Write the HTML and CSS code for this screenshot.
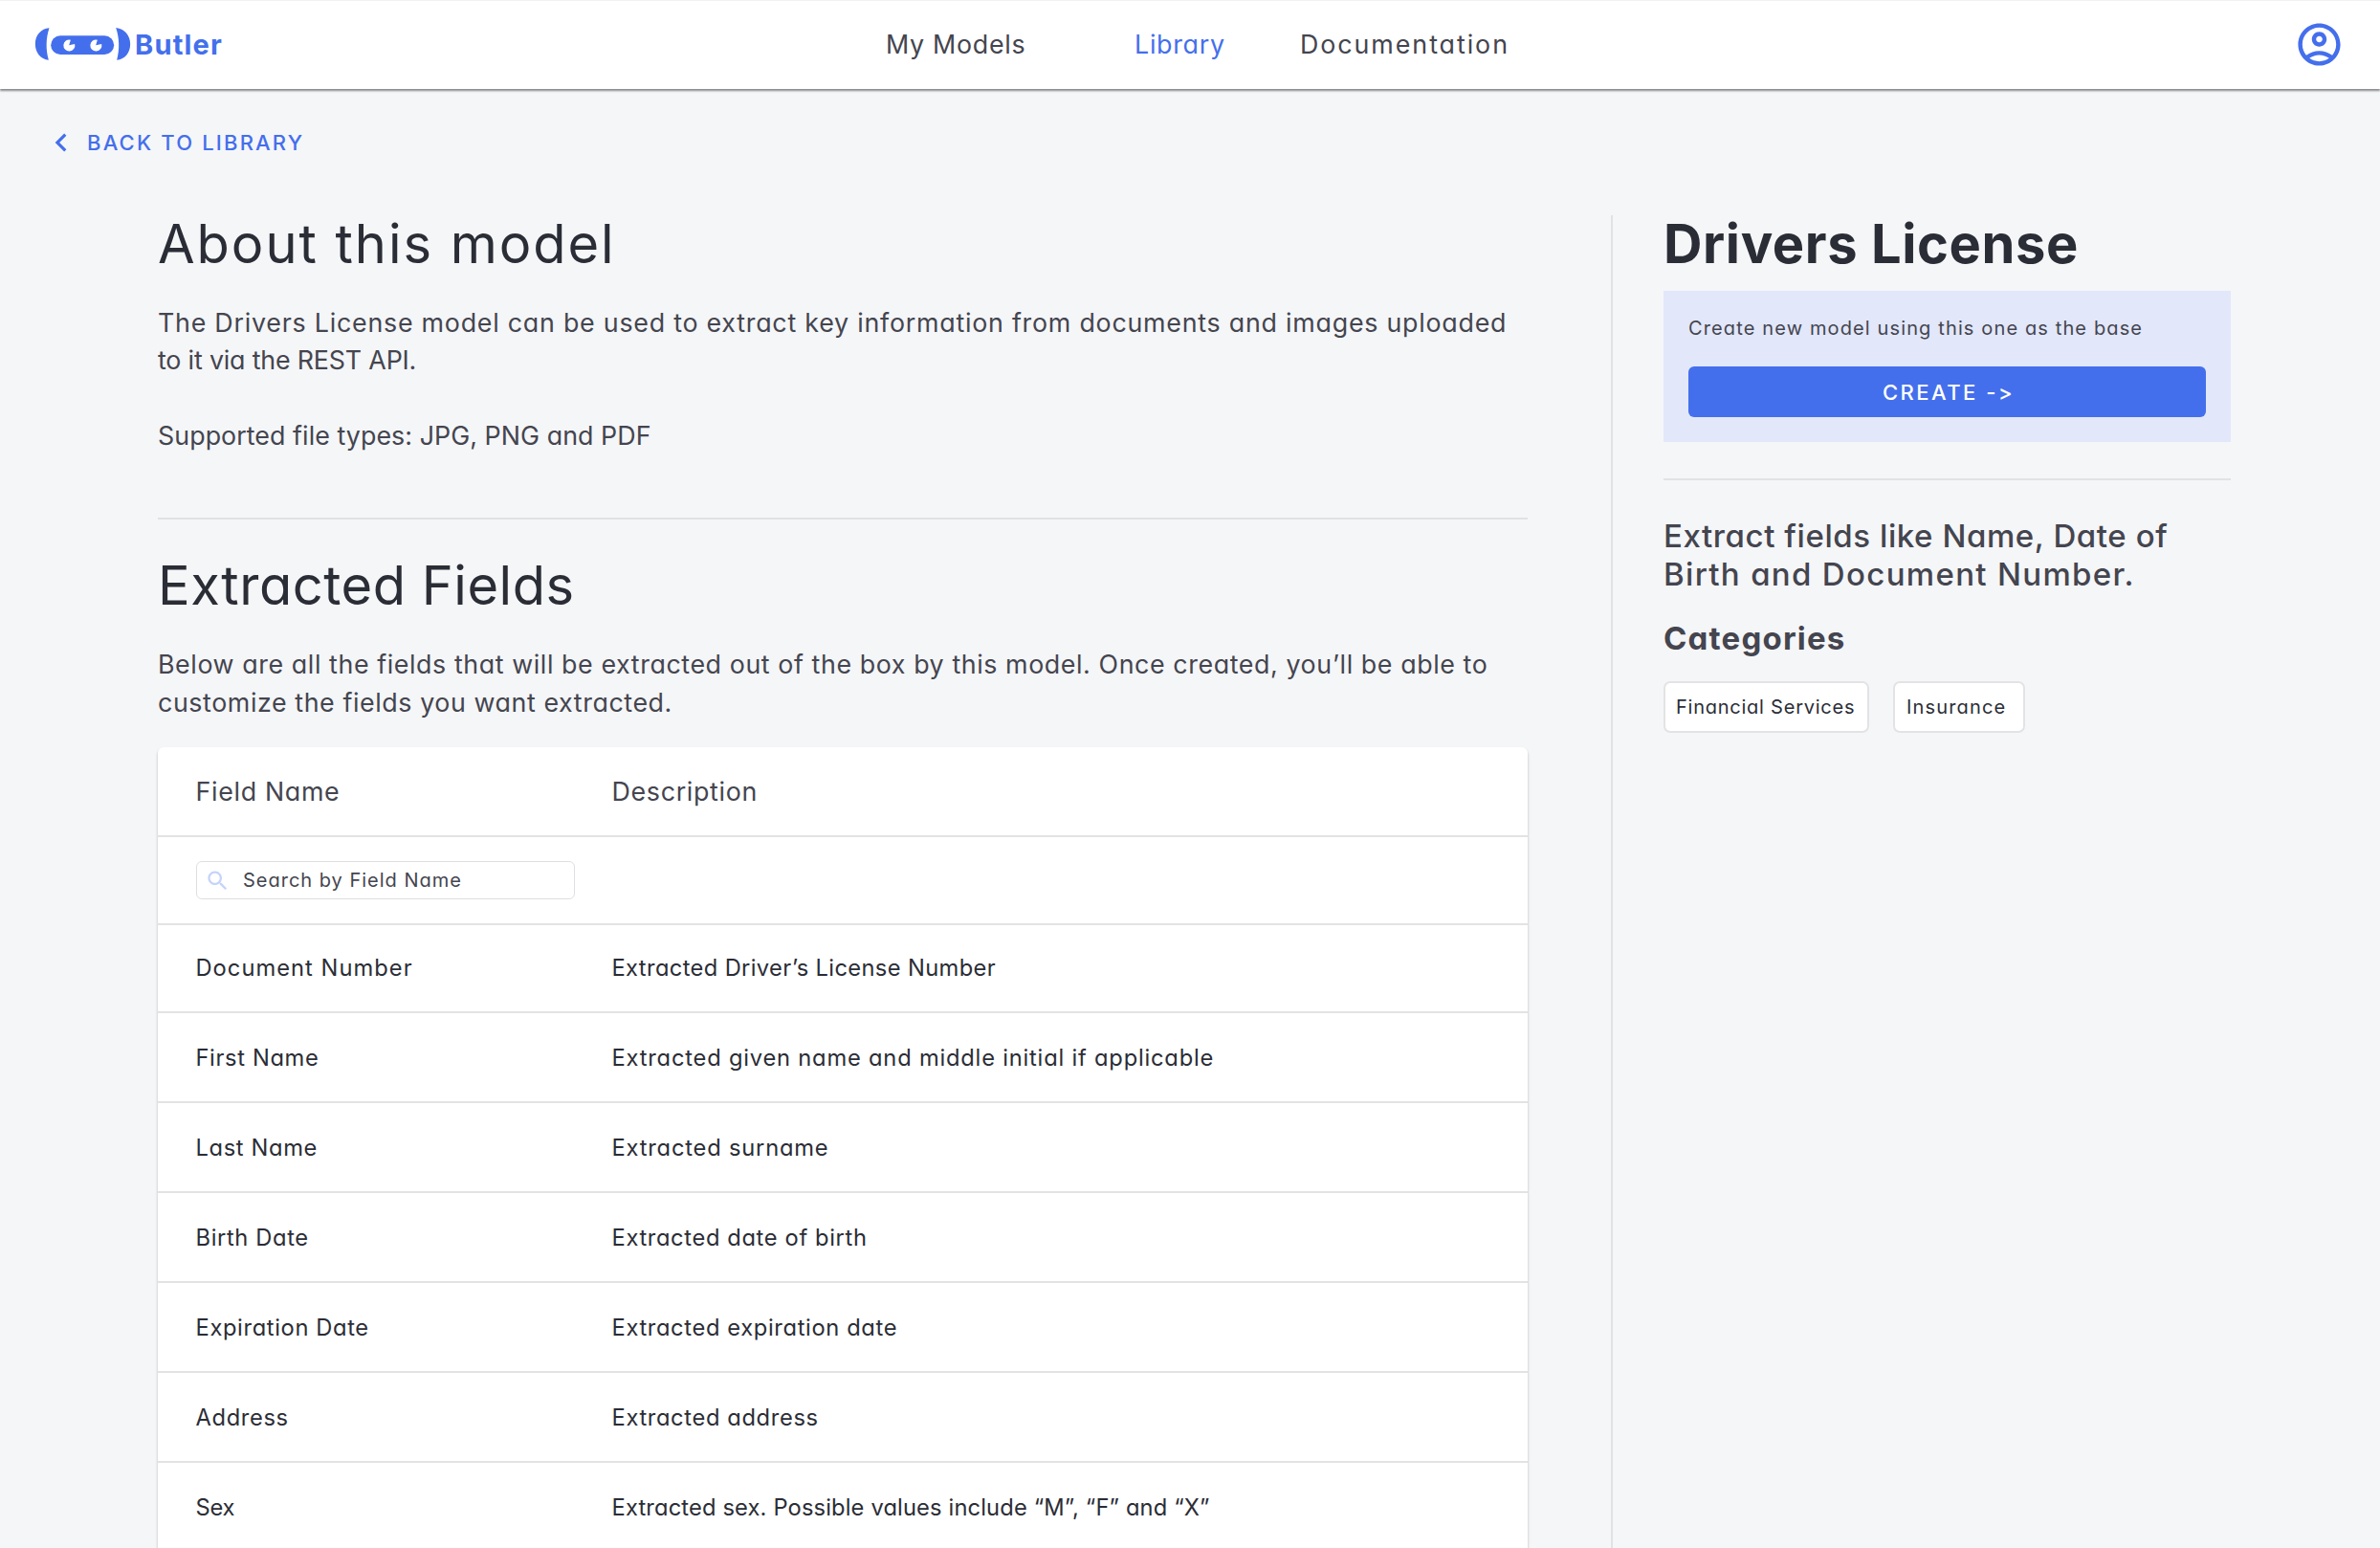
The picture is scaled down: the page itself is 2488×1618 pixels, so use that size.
FILE: index.html
```html
<!DOCTYPE html>
<html lang="en">
<head>
<meta charset="utf-8">
<title>Butler</title>
<link rel="stylesheet" href="styles.css">
</head>
<body>
<header class="topbar">
  <a class="brand">
    <svg class="brand-mark" viewBox="108 84 302 108" aria-hidden="true">
      <path d="M154 88C128 90 110 111 110 138s17 48 42 50c-9-32-9-67 2-100z"/>
      <path d="M363 87c27 3 45 24 45 51s-16 48-42 50c9-33 8-69-3-101z"/>
      <rect x="159" y="112" width="198" height="59" rx="29.500"/>
      <path class="eye" d="M216 142l5-17a18 18 0 1 0 13 13z"/>
      <path class="eye" d="M300 142l5-17a18 18 0 1 0 13 13z"/>
    </svg>
    <span class="brand-name">Butler</span>
  </a>
  <a class="nav-link">My Models</a>
  <a class="nav-link active">Library</a>
  <a class="nav-link nav-docs">Documentation</a>
  <svg class="account" viewBox="0 0 24 24" aria-hidden="true"><path d="M12 2C6.480 2 2 6.480 2 12s4.480 10 10 10 10-4.480 10-10S17.520 2 12 2zM7.350 18.500C8.660 17.560 10.260 17 12 17s3.340.560 4.650 1.500c-1.310.940-2.910 1.500-4.650 1.500s-3.340-.560-4.650-1.500zm10.790-1.380C16.450 15.800 14.320 15 12 15s-4.450.800-6.140 2.120C4.700 15.730 4 13.950 4 12c0-4.420 3.580-8 8-8s8 3.580 8 8c0 1.950-.700 3.730-1.860 5.120zM12 6c-1.930 0-3.500 1.570-3.500 3.500S10.070 13 12 13s3.500-1.570 3.500-3.500S13.930 6 12 6zm0 5c-.830 0-1.500-.670-1.500-1.500S11.170 8 12 8s1.500.670 1.500 1.500S12.830 11 12 11z"/></svg>
</header>
<a class="back">
  <svg class="chevron" viewBox="0 0 24 24" aria-hidden="true"><path d="M15.410 7.410L14 6l-6 6 6 6 1.410-1.410L10.830 12z"/></svg>
  <span>BACK TO LIBRARY</span>
</a>
<main class="page">
  <section class="content">
    <h1 class="heading heading-wide">About this model</h1>
    <p class="copy">The Drivers License model can be used to extract key information from documents and images uploaded<br><span class="track-0">to it via the REST API.</span><br><br><span class="track-1">Supported file types: JPG, PNG and PDF</span></p>
    <hr class="rule">
    <h2 class="heading">Extracted Fields</h2>
    <p class="copy copy-fields">Below are all the fields that will be extracted out of the box by this model. Once created, you’ll be able to<br>customize the fields you want extracted.</p>
    <div class="table">
      <div class="row row-head"><div>Field Name</div><div>Description</div></div>
      <div class="row row-search"><div class="search"><svg class="search-icon" viewBox="0 0 24 24" aria-hidden="true"><path d="M15.500 14h-.790l-.280-.270C15.410 12.590 16 11.110 16 9.500 16 5.910 13.090 3 9.500 3S3 5.910 3 9.500 5.910 16 9.500 16c1.610 0 3.090-.590 4.230-1.570l.270.280v.790l5 4.990L20.490 19l-4.990-5zm-6 0C7.010 14 5 11.990 5 9.500S7.010 5 9.500 5 14 7.010 14 9.500 11.990 14 9.500 14z"/></svg><span>Search by Field Name</span></div></div>
      <div class="row row-first"><div class="track-4">Document Number</div><div class="track-2">Extracted Driver’s License Number</div></div>
      <div class="row"><div>First Name</div><div class="track-3">Extracted given name and middle initial if applicable</div></div>
      <div class="row"><div>Last Name</div><div class="track-3">Extracted surname</div></div>
      <div class="row"><div>Birth Date</div><div>Extracted date of birth</div></div>
      <div class="row"><div>Expiration Date</div><div>Extracted expiration date</div></div>
      <div class="row"><div>Address</div><div>Extracted address</div></div>
      <div class="row"><div class="track-0">Sex</div><div class="track-1">Extracted sex. Possible values include “M”, “F” and “X”</div></div>
    </div>
  </section>
  <aside class="side">
    <h2 class="title">Drivers License</h2>
    <div class="create-card">
      <p class="create-note">Create new model using this one as the base</p>
      <button class="create-button">CREATE -&gt;</button>
    </div>
    <hr class="rule">
    <p class="summary">Extract fields like Name, Date of<br><span class="summary-end">Birth and Document Number.</span></p>
    <h3 class="subhead">Categories</h3>
    <div class="chips"><span class="chip">Financial Services</span><span class="chip chip-insurance">Insurance</span></div>
  </aside>
</main>
</body>
</html>
```
FILE: styles.css
```css
* { box-sizing: border-box; }

body {
  margin: 0;
  height: 1618px;
  overflow: hidden;
  background: #f5f6f8;
  color: #2b2d36;
  font-family: Inter, "Noto Sans", sans-serif;
  font-feature-settings: "cv11", "calt" 0;
}

h1, h2, h3, p { margin: 0; font-weight: 400; }

/* Top bar */
.topbar {
  display: grid;
  grid-template-columns: 926px 260px 173px 1fr auto;
  align-items: center;
  height: 93px;
  padding: 0 37px 2px 0;
  border-top: 1px solid #f2f2f2;
  background: #fff;
  box-shadow: 0 2px 2px rgba(0, 0, 0, .45);
}
.brand { display: flex; align-items: center; gap: 4px; padding-left: 36px; color: #446fec; }
.brand-mark { width: 101px; height: 36px; fill: #446fec; }
.brand-mark .eye { fill: #fff; }
.brand-name { font-size: 29px; font-weight: 700; letter-spacing: 1.2px; }
.nav-link { font-size: 26.8px; letter-spacing: .73px; color: #44454f; }
.nav-link.active { color: #446fec; }
.nav-docs { letter-spacing: 1.95px; }
.account { width: 53px; height: 53px; fill: #446fec; }

.back {
  display: flex;
  align-items: center;
  gap: 8px;
  height: 38px;
  margin: 37px 0 57px 45px;
  font-size: 22px;
  font-weight: 500;
  letter-spacing: 2.18px;
  color: #446fec;
}
.chevron { width: 38px; height: 38px; fill: currentColor; }

/* Page columns */
.page { display: flex; height: 1393px; padding-left: 165px; }
.content { width: 1432px; margin-right: 87px; }
.heading { font-size: 56px; line-height: 60px; letter-spacing: .52px; }
.heading-wide { letter-spacing: 1.97px; }
.copy {
  margin-top: 32.6px;
  font-size: 26.8px;
  line-height: 39.6px;
  letter-spacing: .765px;
  color: #44454f;
  white-space: nowrap;
}
.copy-fields { margin-top: 33px; letter-spacing: .59px; }
.copy .track-0 { letter-spacing: -.17px; }
.copy .track-1 { letter-spacing: .06px; }
.rule { height: 2px; margin: 65.4px 0 39px; border: 0; background: #e0e2e4; }

/* Fields table */
.table { margin-top: 26.4px; border-radius: 6px; background: #fff; box-shadow: 0 2px 3px rgba(0, 0, 0, .25); }
.row {
  display: grid;
  grid-template-columns: 435px 1fr;
  align-items: center;
  height: 94px;
  padding: 1px 0 0 39.5px;
  border-bottom: 2px solid #e3e3e3;
  font-size: 23.7px;
  letter-spacing: .64px;
}
.row-head { font-size: 26.8px; letter-spacing: .68px; color: #44454f; }
.row-search, .row-first { height: 92px; }
.row-first { padding-top: 0; }
.search {
  display: flex;
  align-items: center;
  gap: 13px;
  width: 396px;
  height: 40px;
  margin-left: .5px;
  padding-left: 8px;
  border: 1px solid #dfdfe2;
  border-radius: 6px;
  font-size: 20px;
  letter-spacing: .99px;
  color: #44454f;
}
.search-icon { width: 27px; height: 27px; fill: #c5d3fa; }

.track-0 { letter-spacing: -.3px; }
.track-1 { letter-spacing: .15px; }
.track-2 { letter-spacing: .37px; }
.track-3 { letter-spacing: .8px; }
.track-4 { letter-spacing: 1.03px; }

/* Sidebar */
.side { width: 648px; padding-left: 53px; border-left: 2px solid #e0e2e4; }
.title { font-size: 56px; line-height: 60px; font-weight: 700; letter-spacing: .6px; }
.create-card { height: 158px; margin-top: 19px; padding: 26px; background: #e2e7fa; }
.create-note { font-size: 20px; line-height: 26px; letter-spacing: 1.13px; color: #44454f; }
.create-button {
  display: block;
  width: 100%;
  height: 53px;
  margin-top: 27px;
  padding: 0 0 0 3px;
  border: 0;
  border-radius: 6px;
  background: #446fec;
  color: #fff;
  font: 500 22px Inter, sans-serif;
  font-feature-settings: "calt" 0;
  letter-spacing: 2.5px;
}
.side .rule { margin: 38px 0 39px; }
.summary { font-size: 33px; line-height: 39.6px; font-weight: 500; letter-spacing: .58px; color: #44454f; }
.summary-end { letter-spacing: 1.32px; }
.subhead { margin-top: 27px; font-size: 33px; line-height: 40px; font-weight: 700; letter-spacing: 1.2px; color: #44454f; }
.chips { display: flex; gap: 25px; margin-top: 25px; }
.chip {
  width: 215px;
  height: 54px;
  padding-left: 11px;
  border: 2px solid #e3e3e5;
  border-radius: 7px;
  background: #fff;
  font-size: 20px;
  line-height: 50px;
  letter-spacing: .76px;
  white-space: nowrap;
}
.chip-insurance { width: 138px; padding-left: 12px; letter-spacing: 1.17px; }
```
